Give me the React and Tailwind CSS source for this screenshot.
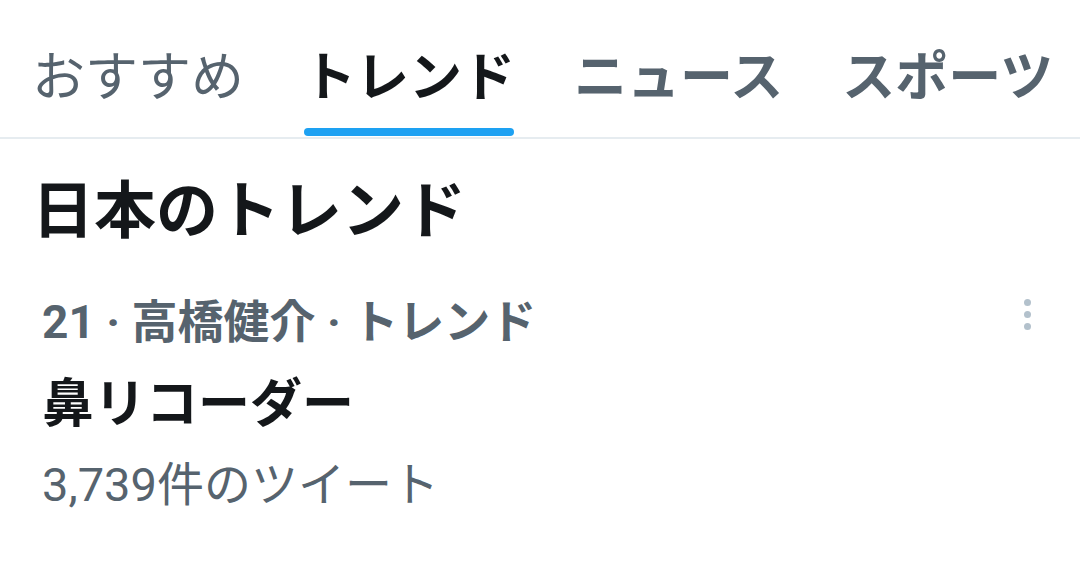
import React from 'react';

const tabs = [
    { label: 'おすすめ', active: false, weight: 'font-normal' },
    { label: 'トレンド', active: true, weight: 'font-bold' },
    { label: 'ニュース', active: false, weight: 'font-bold' },
    { label: 'スポーツ', active: false, weight: 'font-bold' },
];

const App = () => {
    return (
        <div
            className="w-[1080px] h-[563px] bg-white overflow-hidden"
            style={{ fontFamily: 'Roboto, "Noto Sans CJK JP", sans-serif' }}
        >
            {/* Tabs */}
            <div className="flex gap-[59px] pl-[32px] border-b-[2px] border-[#e6ecf0] h-[139px]">
                {tabs.map((tab) => (
                    <div key={tab.label} className="flex flex-col">
                        <div
                            className={`pt-[52px] text-[53px] leading-[53px] whitespace-nowrap ${tab.weight} ${tab.active ? 'text-[#14171a]' : 'text-[#56636e]'}`}
                        >
                            {tab.label}
                        </div>
                        {tab.active && (
                            <div className="mt-auto mb-[1px] mx-[1px] h-[8px] rounded-full bg-[#1da1f2]" />
                        )}
                    </div>
                ))}
            </div>

            {/* Heading */}
            <h2 className="pl-[32px] pt-[42px] text-[62px] leading-[62px] font-bold text-[#14171a] whitespace-nowrap">
                日本のトレンド
            </h2>

            {/* Trend item */}
            <div className="flex pl-[42px] pr-[49px] pt-[56px]">
                <div className="flex-1">
                    <div className="text-[46px] leading-[46px] font-bold text-[#56636e] whitespace-nowrap">
                        21 · 高橋健介 · トレンド
                    </div>
                    <div className="mt-[34px] text-[52px] leading-[52px] font-bold text-[#14171a] whitespace-nowrap">
                        鼻リコーダー
                    </div>
                    <div className="mt-[30px] text-[47px] leading-[47px] font-normal text-[#56636e] whitespace-nowrap">
                        3,739件のツイート
                    </div>
                </div>
                <div className="flex flex-col gap-[5px]">
                    <span className="w-[7px] h-[7px] rounded-full bg-[#b3c1cc]" />
                    <span className="w-[7px] h-[7px] rounded-full bg-[#b3c1cc]" />
                    <span className="w-[7px] h-[7px] rounded-full bg-[#b3c1cc]" />
                </div>
            </div>
        </div>
    );
};

export default App;
